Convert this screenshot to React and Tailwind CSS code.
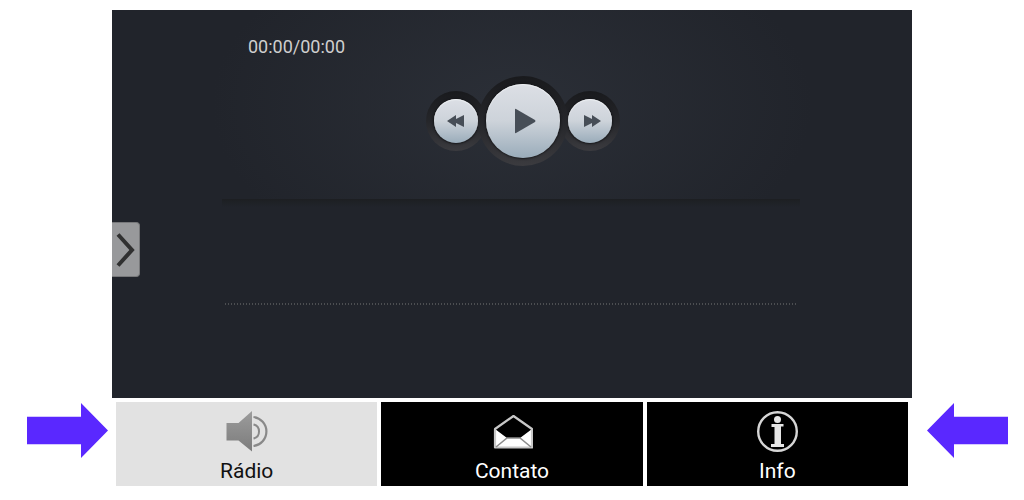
import { useState } from 'react'

function SpeakerIcon() {
  return (
    <svg width="42" height="42" viewBox="0 0 42 42" fill="none" aria-hidden="true">
      <defs>
        <linearGradient id="speaker" x1="0" y1="0" x2="0" y2="1">
          <stop offset="0" stopColor="#9c9c9c" />
          <stop offset="1" stopColor="#7c7c7c" />
        </linearGradient>
      </defs>
      <path d="M.5 13h12L26 1v40.400L12.500 30.500H.5z" fill="url(#speaker)" />
      <path d="M27.500 14.500a7.200 7.200 0 0 1 0 14" stroke="#898989" strokeWidth="2" />
      <path d="M27.500 7a14.600 14.600 0 0 1 0 29" stroke="#898989" strokeWidth="2.200" />
    </svg>
  )
}

function EnvelopeIcon() {
  return (
    <svg width="42" height="42" viewBox="0 0 42 42" fill="none" aria-hidden="true">
      <path d="M4 19v19h37V19l-12 9H16z" fill="#fff" />
      <path d="M4 19L22.500 6 41 19v18.500H4z" stroke="#c8c8c8" strokeWidth="2.200" strokeLinejoin="round" />
      <path d="M5 37l11-9h13l11 9" stroke="#8c8c8c" strokeWidth="1.600" />
    </svg>
  )
}

function InfoIcon() {
  return (
    <svg width="42" height="42" viewBox="0 0 42 42" fill="none" aria-hidden="true">
      <circle cx="21.500" cy="21.500" r="19.300" stroke="#d6d6d6" strokeWidth="2.400" />
      <circle cx="21.500" cy="9.500" r="3.500" fill="#e6e6e6" />
      <path d="M15.500 14H27.500v2.500h-2.500v17.500h3V37H15v-3h3.500V17h-3z" fill="#e6e6e6" />
    </svg>
  )
}

const tabs = [
  { id: 'radio', label: 'Rádio', icon: SpeakerIcon },
  { id: 'contato', label: 'Contato', icon: EnvelopeIcon },
  { id: 'info', label: 'Info', icon: InfoIcon }
]

function Arrow({ className = '' }) {
  return (
    <svg width="81" height="55" viewBox="0 0 81 55" fill="#5a28ff" className={className} aria-hidden="true">
      <path d="M0 13.700h54V0l27 27.500L54 55V41.300H0z" />
    </svg>
  )
}

const knob = 'flex items-center justify-center rounded-full bg-linear-to-b from-[#dcdfe5] via-[#cdd3da] to-[#9aacba] shadow-[0_0_2px_1px_#16171a,inset_0_1px_1px_#eef0f3]'
const well = 'flex items-center justify-center rounded-full bg-linear-to-b from-[#191a1d] via-[#25262a] to-[#3b3b3f]'

function Controls() {
  const [playing, setPlaying] = useState(false)

  return (
    <div className="flex items-center justify-center pl-[22px]">
      <div className={`${well} size-[60px]`}>
        <button type="button" aria-label="Anterior" className={`${knob} size-11`}>
          <svg width="18" height="14" viewBox="0 0 18 14" fill="#474e57">
            <path d="M0 7l9-6v4l8-4v12l-8-4v4z" />
          </svg>
        </button>
      </div>
      <div className={`${well} relative -mx-2 size-[90px]`}>
        <button
          type="button"
          aria-label={playing ? 'Pausar' : 'Tocar'}
          className={`${knob} size-[74px]`}
          onClick={() => setPlaying(!playing)}
        >
          <svg width="24" height="26" viewBox="0 0 24 26" fill="#474e57" className="ml-1">
            {playing ? (
              <path d="M3 2h6v22H3zM14 2h6v22h-6z" />
            ) : (
              <path d="M2 1.500Q2 .5 3 1l19 11q1 1 0 2L3 25q-1 .5-1-.5z" />
            )}
          </svg>
        </button>
      </div>
      <div className={`${well} size-[60px]`}>
        <button type="button" aria-label="Próxima" className={`${knob} size-11`}>
          <svg width="18" height="14" viewBox="0 0 18 14" fill="#474e57" className="ml-1">
            <path d="M18 7L9 1v4L1 1v12l8-4v4z" />
          </svg>
        </button>
      </div>
    </div>
  )
}

function Player() {
  return (
    <main className="relative bg-[#21242b] pb-[93px]">
      <div className="bg-[radial-gradient(ellipse_300px_180px_at_50%_95px,#2b2f37,#21242b)] px-28 pt-[25px] pb-[33px]">
        <p className="pl-6 text-[18px] leading-6 text-[#cfcfcf]">00:00/00:00</p>
        <div className="pt-[17px]">
          <Controls />
        </div>
      </div>
      <div className="px-28">
        <div className="-ml-0.5 h-2 bg-linear-to-b from-[#1d1f22] to-[#21242b]" />
        {/* dotted rule, 1px dot every 3px */}
        <div className="mt-24 mr-0.5 h-0.5 bg-[repeating-linear-gradient(90deg,transparent_0_1px,#4c4e51_1px_2px,transparent_2px_3px)]" />
      </div>

      <button
        type="button"
        aria-label="Abrir menu"
        className="absolute top-[212px] left-0 flex h-[55px] w-7 items-center rounded-r-sm border border-l-0 border-[#77787a] bg-[#98999b]"
      >
        <svg width="24" height="36" viewBox="0 0 24 36" fill="none" stroke="#303030" strokeWidth="4">
          <path d="M6 2.500L20 18 6 33.500" />
        </svg>
      </button>
    </main>
  )
}

export default function App() {
  const [active, setActive] = useState('radio')

  return (
    <div className="flex min-h-screen items-start bg-white pt-2.5 font-['Roboto',sans-serif]">
      <div className="flex w-28 shrink-0 justify-end pt-[393px] pr-1">
        <Arrow />
      </div>

      <div className="min-w-0 flex-1">
        <Player />
        <nav className="grid grid-cols-3 gap-1 p-1">
          {tabs.map(({ id, label, icon: Icon }) => (
            <button
              key={id}
              type="button"
              onClick={() => setActive(id)}
              className={`flex h-[84px] flex-col items-center pt-2 text-[21px] leading-7 ${
                active === id ? 'bg-[#e2e2e2] text-[#111]' : 'bg-black text-white'
              }`}
            >
              <Icon />
              <span className="pt-[5px]">{label}</span>
            </button>
          ))}
        </nav>
      </div>

      <div className="flex w-28 shrink-0 pt-[393px] pl-[15px]">
        <Arrow className="rotate-180" />
      </div>
    </div>
  )
}
